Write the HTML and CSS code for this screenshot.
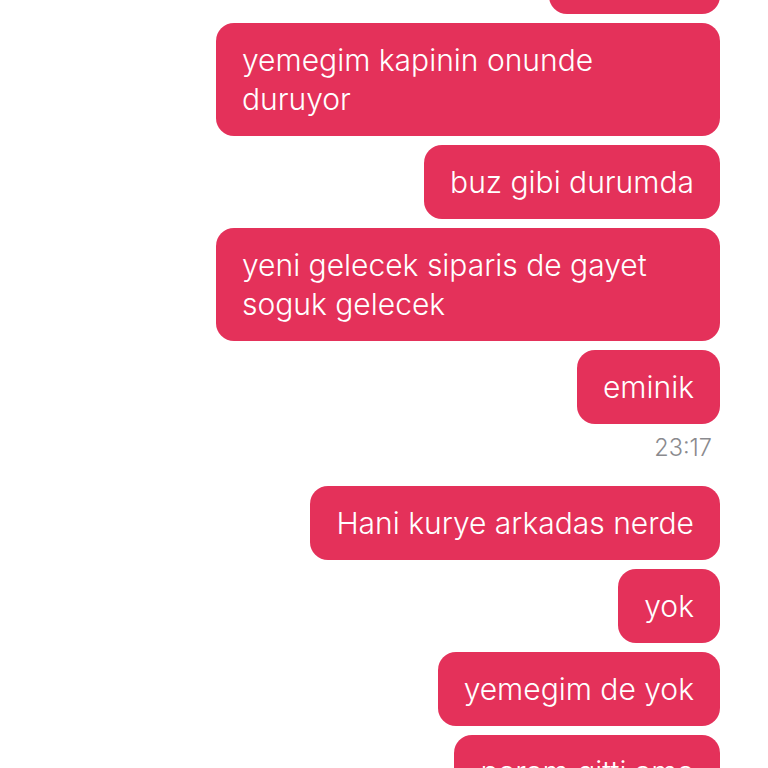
FILE: index.html
```html
<!DOCTYPE html>
<html lang="tr">
<head>
<meta charset="utf-8">
<title>Sohbet</title>
<link rel="stylesheet" href="styles.css">
</head>
<body>
<main class="chat">
  <div class="bubble bubble-top">ne oldu?</div>
  <div class="bubble">yemegim kapinin onunde duruyor</div>
  <div class="bubble">buz gibi durumda</div>
  <div class="bubble">yeni gelecek siparis de gayet soguk gelecek</div>
  <div class="bubble">eminik</div>
  <div class="time">23:17</div>
  <div class="bubble">Hani kurye arkadas nerde</div>
  <div class="bubble">yok</div>
  <div class="bubble">yemegim de yok</div>
  <div class="bubble">param gitti ama</div>
</main>
</body>
</html>
```

FILE: styles.css
```css
html, body {
  margin: 0;
  padding: 0;
  background: #ffffff;
  height: 768px;
  overflow: hidden;
}
.chat {
  display: flex;
  flex-direction: column;
  align-items: flex-end;
  gap: 9px;
  padding-right: 48px;
  font-family: Inter, "Noto Sans", sans-serif;
}
.bubble {
  box-sizing: border-box;
  max-width: 504px;
  background: #e4315a;
  color: #ffffff;
  font-size: 30px;
  font-weight: 300;
  line-height: 39px;
  letter-spacing: 0;
  padding: 17.5px 26px;
  border-radius: 18px;
}
.bubble-top {
  margin-top: -60px;
}
.time {
  color: #8a8a8e;
  font-size: 23.5px;
  font-weight: 300;
  line-height: 30px;
  padding-right: 8px;
  margin-bottom: 14px;
}
```
